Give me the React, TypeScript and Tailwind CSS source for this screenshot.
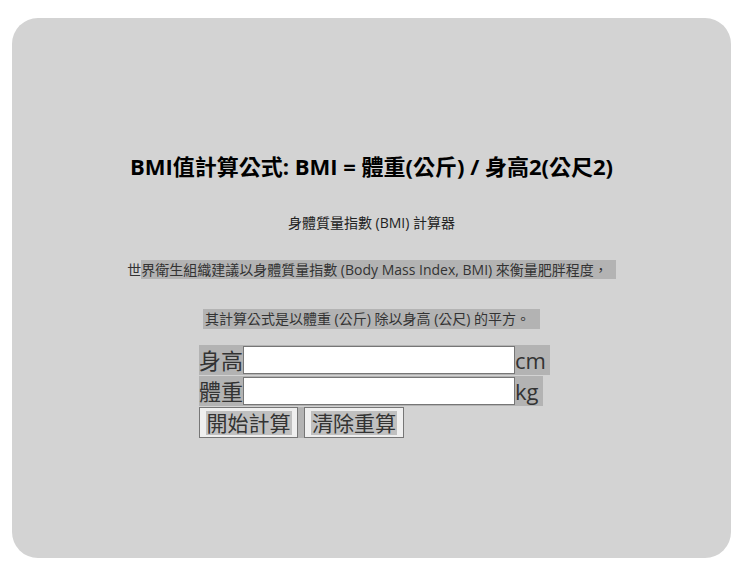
import React from "react";

const font = { fontFamily: '"Open Sans", "Noto Sans CJK TC", sans-serif' };

export default function App() {
  return (
    <div className="w-[743px] h-[568px] bg-white pt-[18px] px-[12px]" style={font}>
      <div className="h-[540px] rounded-[26px] bg-[#d3d3d3] flex flex-col items-center pt-[132px]">
        <h2 className="text-[22px] font-bold leading-[32px] text-black">
          BMI值計算公式: BMI = 體重(公斤) / 身高2(公尺2)
        </h2>
        <p className="mt-[31px] text-[14px] leading-[20px] text-[#222]">身體質量指數 (BMI) 計算器</p>
        <p className="mt-[27px] text-[14px] leading-[20px] text-[#333]">
          世<span className="bg-[#b3b3b3] pr-[8px]">界衛生組織建議以身體質量指數 (Body Mass Index, BMI) 來衡量肥胖程度，</span>
        </p>
        <p className="mt-[29px] text-[14px] leading-[20px] text-[#333]">
          <span className="bg-[#b3b3b3] inline-block pl-[2px] pr-[10px]">其計算公式是以體重 (公斤) 除以身高 (公尺) 的平方。</span>
        </p>
        <div className="mt-[16px] ml-[6px] w-[351px] flex flex-col items-start text-[22px] text-[#333]">
          <div className="flex items-center bg-[#b3b3b3] h-[30px] mb-[1px]">
            <span className="w-[44px] leading-[30px]">身高</span>
            <input className="w-[272px] h-[28px] bg-white border border-[#767676] outline-none" />
            <span className="w-[35px] leading-[30px]">cm</span>
          </div>
          <div className="flex items-center bg-[#b3b3b3] h-[30px] mb-[1px]">
            <span className="w-[44px] leading-[30px]">體重</span>
            <input className="w-[272px] h-[28px] bg-white border border-[#767676] outline-none" />
            <span className="w-[28px] leading-[30px]">kg</span>
          </div>
          <div className="flex bg-[#b3b3b3] gap-[6px]">
            <button className="w-[99px] h-[31px] border border-[#767676] bg-[#efefef] flex items-center justify-center text-[21px] text-[#333]">
              <span className="bg-[#c0c0c0] leading-[24px] px-[1px]">開始計算</span>
            </button>
            <button className="w-[100px] h-[31px] border border-[#767676] bg-[#efefef] flex items-center justify-center text-[21px] text-[#333]">
              <span className="bg-[#c0c0c0] leading-[24px] px-[1px]">清除重算</span>
            </button>
          </div>
        </div>
      </div>
    </div>
  );
}
